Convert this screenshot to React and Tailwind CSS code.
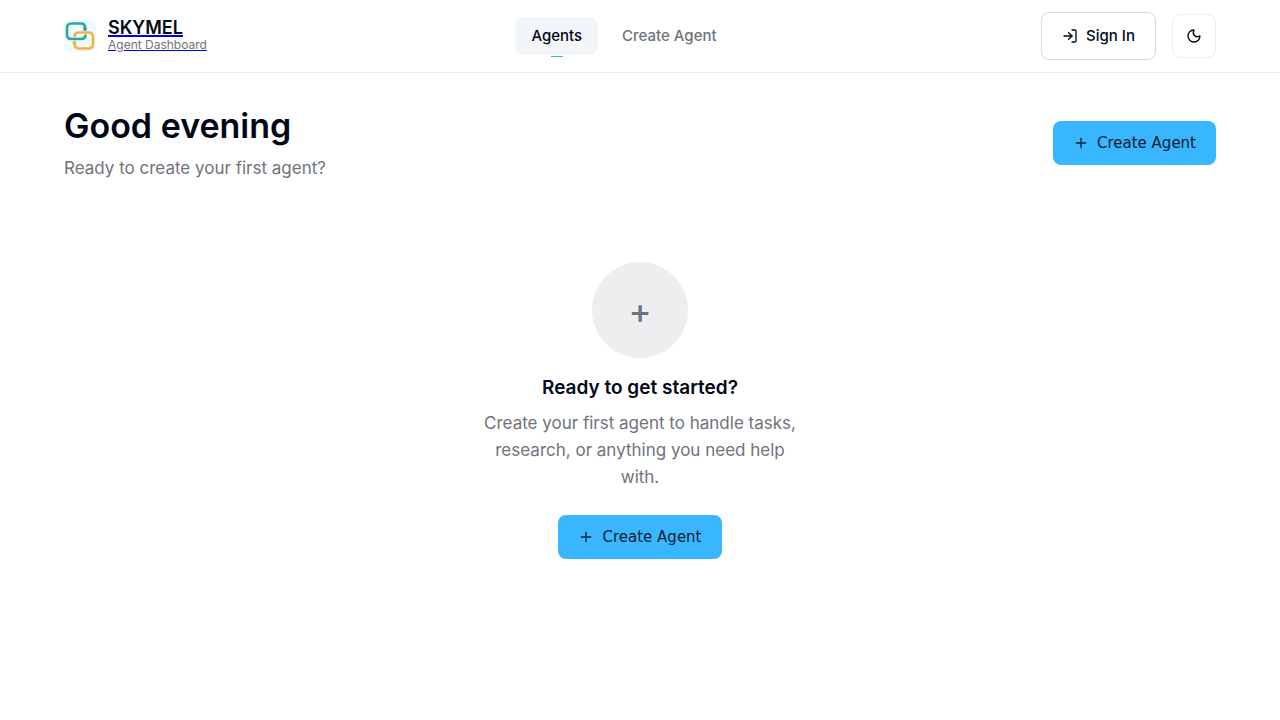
import { LogIn, Moon, Plus } from 'lucide-react'

const Logo = () => (
  <svg viewBox="0 0 32 32" className="size-8" fill="none" strokeLinecap="round" aria-hidden="true">
    <rect width="32" height="32" rx="6" fill="#f0f9fc" />
    <path d="M21 7.500Q21 3.500 17 3.500H7.500Q3 3.500 3 8V14.500Q3 19 7.500 19H17Q21 19 21.500 15.500" stroke="#2aa898" strokeWidth="2.600" />
    <path d="M10.500 24Q11 28.500 15 28.500H24.500Q29 28.500 29 24V17Q29 12.500 24.500 12.500H15Q11 12.500 10.500 16" stroke="#f6b04b" strokeWidth="2.600" />
    <circle cx="21" cy="9" r="2" fill="#2aa898" />
    <circle cx="10.500" cy="23" r="2" fill="#f6b04b" />
  </svg>
)

const CreateButton = () => (
  <button
    type="button"
    className="flex h-11 items-center gap-2 rounded-lg bg-[#38b6ff] px-5 font-['DejaVu_Sans',sans-serif] text-[15px] text-[#10202f]"
  >
    <Plus className="size-4" />
    Create Agent
  </button>
)

const Header = () => (
  <header className="border-b border-[#e9ebee]">
    <div className="flex h-18 items-center justify-between px-16">
      <a href="#home" className="flex items-center gap-3">
        <Logo />
        <span className="flex flex-col text-[#0000ee]">
          <span className="text-lg leading-[18px] font-semibold underline decoration-2">
            <span className="text-[#020817]">SKYMEL</span>
          </span>
          <span className="text-xs leading-4 underline">
            <span className="text-[#6f737c]">Agent Dashboard</span>
          </span>
        </span>
      </a>
      <nav className="flex gap-2 text-[15px] leading-[22px] font-medium">
        <a href="#agents" className="relative rounded-lg bg-[#f3f6f8] px-4 py-2 text-[#020817]">
          Agents
          <span className="absolute top-full left-1/2 mt-px h-px w-3 -translate-x-1/2 bg-[#45b0d8]" />
        </a>
        <a href="#create" className="rounded-lg px-4 py-2 text-[#6f737c]">Create Agent</a>
      </nav>
      <div className="flex items-center gap-4">
        <button type="button" className="flex h-12 items-center gap-2 rounded-lg border border-[#d6dadf] px-5 text-[15px] font-medium">
          <LogIn className="size-4" />
          Sign In
        </button>
        <button type="button" aria-label="Toggle theme" className="flex size-11 items-center justify-center rounded-lg border border-[#eceef1] text-black">
          <Moon className="size-4" />
        </button>
      </div>
    </div>
  </header>
)

export default function App() {
  return (
    <div className="min-h-screen bg-white font-[Inter,sans-serif] text-[#020817]">
      <Header />
      <main className="px-16 py-8">
        <div className="flex items-center justify-between">
          <div>
            <h1 className="text-[34px] leading-[42px] font-semibold">Good evening</h1>
            <p className="mt-2 text-[17px] leading-[26px] text-[#6f737c]">Ready to create your first agent?</p>
          </div>
          <CreateButton />
        </div>
        <section className="flex flex-col items-center pt-[81px] text-center">
          <div className="flex size-24 items-center justify-center rounded-full bg-[#eceef0] text-[34px] font-medium text-[#6b7280]">+</div>
          <h2 className="mt-4 text-[19px] leading-7 font-semibold">Ready to get started?</h2>
          <p className="mt-2 mb-6 max-w-80 text-[17px] leading-[27px] text-[#6f737c]">
            Create your first agent to handle tasks, research, or anything you need help with.
          </p>
          <CreateButton />
        </section>
      </main>
    </div>
  )
}
